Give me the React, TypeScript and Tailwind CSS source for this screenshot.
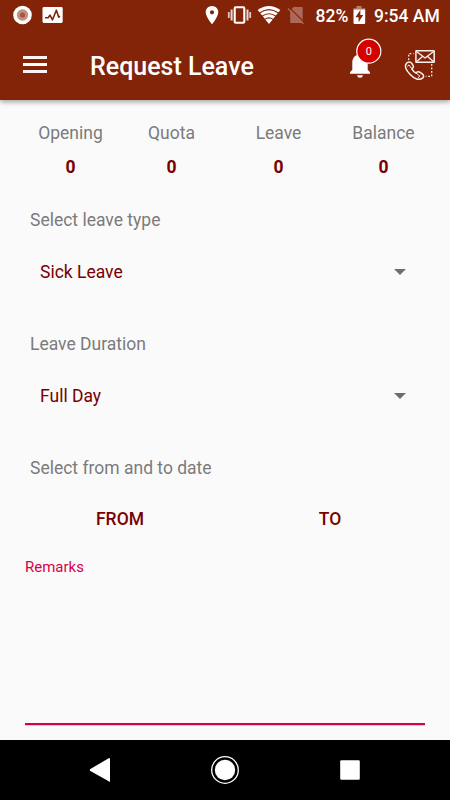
import React from "react";

function Caret() {
  return (
    <svg width="12" height="6" viewBox="0 0 12 6" className="block">
      <path d="M0 0h12L6 6z" fill="#6e6e6e" />
    </svg>
  );
}

function StatusBar() {
  return (
    <div className="flex h-[30px] items-center text-white">
      <svg width="200" height="30" viewBox="0 0 200 30" className="block shrink-0">
        <circle cx="22.5" cy="15" r="9.3" fill="#fff" />
        <circle cx="22.5" cy="15" r="5.7" fill="#c58f80" />
        <circle cx="22.5" cy="15" r="2.6" fill="#a45743" />
        <rect x="42.5" y="7" width="20.2" height="16" rx="1.4" fill="#fff" />
        <path d="M45 17.800h3l2-2.600 2.500 4.600 3.900-9.600 2.400 7 1-1.200" fill="none" stroke="#832409" strokeWidth="1.600" strokeLinejoin="round" />
      </svg>
      <svg width="115" height="30" viewBox="200 0 115 30" className="block shrink-0">
        <path fillRule="evenodd" d="M212 6c-3.600 0-6.300 2.800-6.300 6.200 0 4.600 6.300 12 6.300 12s6.300-7.400 6.300-12C218.300 8.800 215.600 6 212 6zm0 4.200a2.100 2.100 0 1 1 0 4.200 2.100 2.100 0 0 1 0-4.200z" fill="#fff" />
        <rect x="234.700" y="7.200" width="9.600" height="15.600" rx="1" fill="none" stroke="#fff" strokeWidth="2.100" />
        <path d="M231.600 9.600v10.800M247.500 9.600v10.800" stroke="#e9d6d1" strokeWidth="2" />
        <path d="M228.800 12v6M250.200 12v6" stroke="#e0c6bf" strokeWidth="1.800" />
        <path d="M257.700 10Q269 2 280.300 10L269 24z" fill="#fff" />
        <path d="M259.500 13Q269 6.200 278.500 13M262 16.300Q269 11.200 276 16.300M264.700 19.400Q269 16.400 273.300 19.400" fill="none" stroke="#832409" strokeWidth="1.100" />
        <path d="M290.200 10.500L293.500 7h9.200v16h-12.500z" fill="#ac6957" />
        <path d="M289.300 7.400l15.500 15.500" stroke="#832409" strokeWidth="1.200" />
        <path d="M288 8.500l15.500 15.500" stroke="#ac6957" strokeWidth="1.200" />
      </svg>
      <span className="w-[38px] whitespace-nowrap pl-[0.5px] pt-0.5 text-[17.5px] font-medium leading-5">82%</span>
      <svg width="21" height="30" viewBox="353 0 21 30" className="block shrink-0">
        <path d="M353.500 9.700V8.200h3V6h5v2.200h3.700v1.500z" fill="#b77e6d" />
        <path d="M353.500 9.600h11.700v13.200q0 1.200-1.200 1.200h-9.300q-1.200 0-1.200-1.200z" fill="#fff" />
        <path d="M360.400 10l-5 7.200h3.200v5l4.600-7.200h-2.900z" fill="#832409" />
      </svg>
      <span className="whitespace-nowrap pt-0.5 text-[17.5px] font-medium leading-5">9:54 AM</span>
    </div>
  );
}

function AppBar() {
  return (
    <div className="flex h-[70px] items-center pl-[23px] text-white">
      <div className="-mt-px flex w-6 flex-col gap-1">
        <span className="h-[3px] bg-[#fbf2f1]" />
        <span className="h-[3px] bg-white" />
        <span className="h-[3px] bg-[#fbf2f1]" />
      </div>
      <h1 className="ml-[43px] w-[250px] whitespace-nowrap pt-[3px] text-[25px] font-medium leading-8">Request Leave</h1>
      <svg width="110" height="70" viewBox="340 30 110 70" className="block shrink-0">
        <path d="M350 73.800v-1.500l2.300-2.500v-7c0-4.400 2.400-7.400 6.100-8.200v-1.100q0-1.700 1.600-1.700t1.600 1.700v1.100c3.700.8 6.100 3.800 6.100 8.200v7l2.300 2.500v1.500zM357 75.200h6q-.5 2.600-3 2.600t-3-2.600z" fill="#fff" />
        <circle cx="368.800" cy="51.200" r="12" fill="#d60000" stroke="#fff" strokeWidth="1.200" />
        <text x="368.900" y="55.200" textAnchor="middle" fill="#fff" fontSize="11" className="font-[Roboto]">0</text>
        <g fill="none" stroke="#fbf0ee" strokeWidth="1.500" strokeLinejoin="round">
          <rect x="415.900" y="50.700" width="18.300" height="11.600" rx=".5" />
          <path d="M416.500 51.400l8.500 6.700 8.600-6.700M416.500 61.700l5.900-5.300M433.600 61.700l-5.900-5.300" strokeWidth="1.300" />
          <path d="M406.500 63.200c1.500-1.700 3.900-1.700 5.300.2l1.200 1.900c.9 1.500.3 2.700-1.200 3.500 1.100 1.900 2.500 3.400 4.300 4.400 1-1.600 2.600-1.800 4-.8l2.100 1.500c1.900 1.500 1.700 3.200.3 4.300-3.200 2.500-8.400.6-12.300-3.600-3.800-4-6.200-8.600-3.700-11.400z" />
          <path d="M407.300 66.400l1.700-1.500 2.800 3.900M416.100 73.200l3.600 2.600-1.400 2.100" strokeWidth="1" />
          <path d="M408.700 60v-6.300h4.800M431.700 64v12.300h-6" strokeWidth="1.300" strokeDasharray="1.800 1.700" />
        </g>
      </svg>
    </div>
  );
}

const balances = [
  { label: "Opening", cell: "w-[101px]" },
  { label: "Quota", cell: "w-[101px]" },
  { label: "Leave", cell: "w-[113px]" },
  { label: "Balance", cell: "w-[97px]" },
];

function Picker({ label, value }: { label: string; value: string }) {
  return (
    <section className="h-[124px]">
      <p className="ml-[30px] leading-5 text-[#7b7b7b]">{label}</p>
      <div className="mt-8 flex h-5 items-center justify-between pl-10 pr-11 text-[#780000]">
        <span>{value}</span>
        <Caret />
      </div>
    </section>
  );
}

export default function App() {
  return (
    <div className="flex h-[800px] w-[450px] flex-col overflow-hidden bg-[#fafafa] font-[Roboto,sans-serif] text-[17.5px] leading-5">
      <header className="h-[100px] shrink-0 bg-[#832409] shadow-[0_2px_5px_rgba(0,0,0,0.35)]">
        <StatusBar />
        <AppBar />
      </header>

      <main className="flex-1">
        <div className="flex pl-5 pt-[23px] text-center">
          {balances.map((b) => (
            <div key={b.label} className={b.cell}>
              <p className="text-[#7b7b7b]">{b.label}</p>
              <p className="mt-3.5 font-bold text-[#780000]">0</p>
            </div>
          ))}
        </div>

        <div className="mt-[33px]">
          <Picker label="Select leave type" value="Sick Leave" />
          <Picker label="Leave Duration" value="Full Day" />
        </div>

        <p className="ml-[30px] text-[#7b7b7b]">Select from and to date</p>
        <div className="mt-[31px] flex pl-[15px] text-center font-medium text-[#780000]">
          <span className="w-[210px]">FROM</span>
          <span className="w-[210px]">TO</span>
        </div>

        <div className="mx-[25px] mt-7 h-[168px] border-b-2 border-[#d8004b] text-[15px] text-[#d8004b] shadow-[0_1px_0_#f3c2d1]">
          Remarks
        </div>
      </main>

      <nav className="h-[60px] shrink-0 bg-black">
        <svg width="450" height="60" viewBox="0 0 450 60" className="block">
          <path d="M109.200 18.600v22.900L90.400 31q-1.300-1 0-2l18.300-10.800q1.300-.5 1.300.9v21.800q0 1.300-1.300.7z" fill="#fff" />
          <circle cx="225" cy="30" r="13.300" fill="none" stroke="#fff" strokeWidth="1.300" />
          <circle cx="225" cy="30" r="10.200" fill="#fff" />
          <rect x="340.200" y="20.200" width="19.600" height="19.600" rx="1.200" fill="#fff" />
        </svg>
      </nav>
    </div>
  );
}
